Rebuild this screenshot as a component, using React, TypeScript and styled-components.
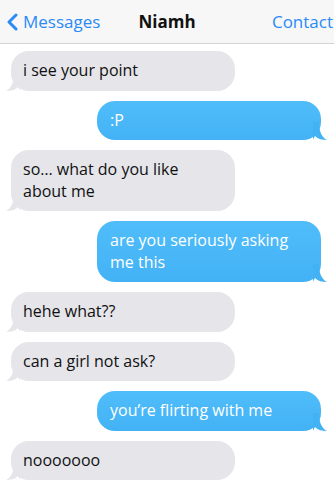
import React from "react";
import styled, { createGlobalStyle } from "styled-components";

const Global = createGlobalStyle`
  html, body { margin: 0; padding: 0; background: #ffffff; }
  body { font-family: "Open Sans", "DejaVu Sans", sans-serif; }
`;

const Screen = styled.div`
  width: 334px;
  height: 497px;
  overflow: hidden;
  background: #ffffff;
  display: flex;
  flex-direction: column;
`;

const Header = styled.header`
  height: 43px;
  flex: 0 0 auto;
  background: #f7f7f7;
  border-bottom: 1px solid #d4d4d6;
  display: grid;
  grid-template-columns: 1fr auto 1fr;
  align-items: center;
`;

const Back = styled.div`
  display: flex;
  align-items: center;
  gap: 5px;
  padding-left: 6px;
  color: #2a8af6;
  font-size: 17px;
`;

const Title = styled.div`
  font-weight: 700;
  font-size: 17px;
  color: #111;
`;

const Action = styled.div`
  justify-self: end;
  padding-right: 1px;
  color: #2a8af6;
  font-size: 17px;
`;

const Thread = styled.div`
  display: flex;
  flex-direction: column;
  gap: 10px;
  padding: 7px 13px 0 11px;
`;

const Bubble = styled.div<{ $me?: boolean }>`
  position: relative;
  width: 224px;
  box-sizing: border-box;
  padding: 9px 16px 9px ${(p) => (p.$me ? "13px" : "12px")};
  border-radius: 18px;
  font-size: 16px;
  line-height: 21.5px;
  align-self: ${(p) => (p.$me ? "flex-end" : "flex-start")};
  background: ${(p) => (p.$me ? "linear-gradient(#50bdfa, #43b2f5)" : "#e5e5ea")};
  color: ${(p) => (p.$me ? "#ffffff" : "#111111")};
`;

const Tail = styled.svg<{ $me?: boolean }>`
  position: absolute;
  bottom: 0;
  width: 14px;
  height: 18px;
  ${(p) => (p.$me ? "right: -6px;" : "left: -5px;")}
`;

const messages: { me: boolean; text: string }[] = [
  { me: false, text: "i see your point" },
  { me: true, text: ":P" },
  { me: false, text: "so… what do you like about me" },
  { me: true, text: "are you seriously asking me this" },
  { me: false, text: "hehe what??" },
  { me: false, text: "can a girl not ask?" },
  { me: true, text: "you’re flirting with me" },
  { me: false, text: "nooooooo" },
];

function BubbleTail({ me }: { me: boolean }) {
  const fill = me ? "#43b2f5" : "#e5e5ea";
  return (
    <Tail $me={me} viewBox="0 0 14 18">
      {me ? (
        <path d="M0 0 L6 0 C6 8 8 15 14 18 C9 18 5 17 2 14 C1 16 0 17 0 18 Z" fill={fill} />
      ) : (
        <path d="M14 0 L8 0 C8 8 6 15 0 18 C5 18 9 17 12 14 C13 16 14 17 14 18 Z" fill={fill} />
      )}
    </Tail>
  );
}

export default function App() {
  return (
    <>
      <Global />
      <Screen>
        <Header>
          <Back>
            <svg width="12" height="18" viewBox="0 0 12 18">
              <polyline points="10,2 3,9 10,16" fill="none" stroke="#2a8af6" strokeWidth="3" strokeLinecap="round" strokeLinejoin="round" />
            </svg>
            <span>Messages</span>
          </Back>
          <Title>Niamh</Title>
          <Action>Contact</Action>
        </Header>
        <Thread>
          {messages.map((m, i) => (
            <Bubble key={i} $me={m.me}>
              {m.text}
              <BubbleTail me={m.me} />
            </Bubble>
          ))}
        </Thread>
      </Screen>
    </>
  );
}
